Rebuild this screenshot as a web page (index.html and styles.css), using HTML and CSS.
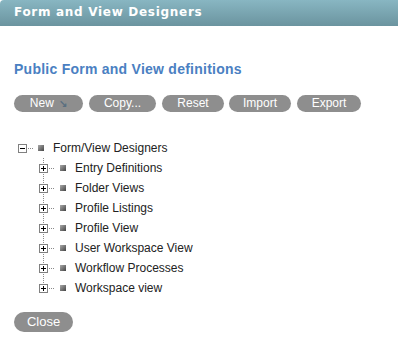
FILE: index.html
```html
<!DOCTYPE html>
<html>
<head>
<meta charset="utf-8">
<link rel="stylesheet" href="styles.css">
</head>
<body>
<div class="header">Form and View Designers</div>
<div class="content">
  <h1 class="title">Public Form and View definitions</h1>
  <div class="toolbar">
    <button class="btn w-new">New <span class="arrow">&#x2198;</span></button>
    <button class="btn w-copy">Copy...</button>
    <button class="btn w-reset">Reset</button>
    <button class="btn w-import">Import</button>
    <button class="btn w-export">Export</button>
  </div>
  <div class="tree">
    <div class="row root">
      <span class="box minus"></span><span class="dots"></span><span class="icon"></span><span class="label">Form/View Designers</span>
    </div>
    <div class="children">
      <div class="row child"><span class="box plus"></span><span class="dots"></span><span class="icon"></span><span class="label">Entry Definitions</span></div>
      <div class="row child"><span class="box plus"></span><span class="dots"></span><span class="icon"></span><span class="label">Folder Views</span></div>
      <div class="row child"><span class="box plus"></span><span class="dots"></span><span class="icon"></span><span class="label">Profile Listings</span></div>
      <div class="row child"><span class="box plus"></span><span class="dots"></span><span class="icon"></span><span class="label">Profile View</span></div>
      <div class="row child"><span class="box plus"></span><span class="dots"></span><span class="icon"></span><span class="label">User Workspace View</span></div>
      <div class="row child"><span class="box plus"></span><span class="dots"></span><span class="icon"></span><span class="label">Workflow Processes</span></div>
      <div class="row child last"><span class="box plus"></span><span class="dots"></span><span class="icon"></span><span class="label">Workspace view</span></div>
    </div>
  </div>
  <button class="btn close">Close</button>
</div>
</body>
</html>
```

FILE: styles.css
```css
html, body {
  margin: 0;
  padding: 0;
  background: #fff;
  width: 398px;
  height: 349px;
  overflow: hidden;
}
body {
  font-family: "Liberation Sans", Arial, sans-serif;
}
.header {
  height: 26px;
  box-sizing: border-box;
  padding: 4px 0 0 14px;
  background: linear-gradient(#88b6c2, #6b949f);
  border-top-left-radius: 4px;
  color: #fff;
  font-family: "DejaVu Sans", Verdana, sans-serif;
  font-weight: bold;
  font-size: 12px;
  letter-spacing: 0.7px;
  line-height: 16px;
}
.content {
  padding: 0 14px;
}
.title {
  margin: 35px 0 0 0;
  color: #4a80c2;
  font-size: 14px;
  line-height: 16px;
  font-weight: bold;
  letter-spacing: 0.25px;
}
.toolbar {
  display: flex;
  gap: 6px;
  margin-top: 18px;
}
.btn {
  border: none;
  background: #8e8e8e;
  color: #fff;
  font-family: "Liberation Sans", Arial, sans-serif;
  font-size: 12px;
  height: 17px;
  line-height: 17px;
  padding: 0;
  border-radius: 9px;
  text-align: center;
}
.w-new { width: 69px; }
.w-copy { width: 67px; }
.w-reset { width: 62px; }
.w-import { width: 62px; margin-left: -1px; }
.w-export { width: 64px; }
.arrow {
  color: #5a6f80;
  font-size: 10px;
  font-weight: bold;
  margin-left: 2px;
}
.tree {
  margin-top: 26px;
  margin-left: 4px;
  font-size: 12px;
  color: #222;
}
.row {
  display: flex;
  align-items: center;
  height: 20px;
}
.box {
  width: 9px;
  height: 9px;
  box-sizing: border-box;
  border: 1px solid #808080;
  background: #fff;
  position: relative;
  flex: none;
}
.box::before {
  content: "";
  position: absolute;
  left: 1px;
  top: 3px;
  width: 5px;
  height: 1px;
  background: #000;
}
.plus::after {
  content: "";
  position: absolute;
  left: 3px;
  top: 1px;
  width: 1px;
  height: 5px;
  background: #000;
}
.dots {
  width: 6px;
  height: 1px;
  margin-left: 1px;
  background: repeating-linear-gradient(90deg, #888 0 1px, transparent 1px 2px);
  flex: none;
}
.icon {
  width: 6px;
  height: 6px;
  margin-left: 5px;
  background: linear-gradient(135deg, #aaa, #444);
  flex: none;
}
.root .icon {
  margin-left: 4px;
}
.label {
  margin-left: 9px;
  white-space: nowrap;
}
.children {
  margin-left: 21px;
  background: repeating-linear-gradient(180deg, #888 0 1px, transparent 1px 2px) no-repeat;
  background-size: 1px 136px;
  background-position: 4px 0;
}
.close {
  display: block;
  margin-top: 14px;
  width: 59px;
  height: 20px;
  line-height: 20px;
  border-radius: 10px;
  font-size: 13px;
}
```
